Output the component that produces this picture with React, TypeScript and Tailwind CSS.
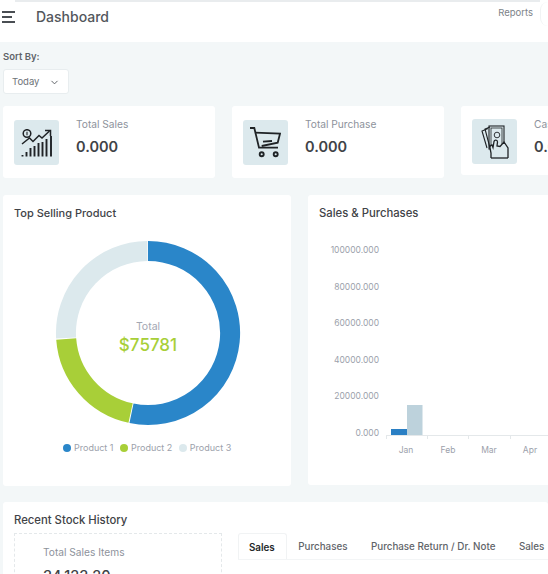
import React from 'react';
import { ChevronDown } from 'lucide-react';

const font = "[font-family:Inter,'Noto_Sans',sans-serif]";

const SalesIcon = () => (
    <svg width="32" height="28" viewBox="0 0 32 28" fill="none" stroke="#1f2326" strokeWidth="1.5">
        <circle cx="6" cy="4.500" r="3.800" />
        <path d="M6 2.700v3.600" strokeWidth="1.100" />
        <path d="M1 15 8.500 9l3.500 3.500 6-6 3 2.500L28.500 2" />
        <path d="M24 1.500h5.500V7" />
        <path d="M1.500 27.500v-1.500M5.500 27.500v-4.500M9.500 27.500V19M13.500 27.500V17M17.500 27.500V14M21.500 27.500V13M25.500 27.500V10M30 27.500V7" strokeWidth="1.900" />
    </svg>
);

const CartIcon = () => (
    <svg width="31" height="31" viewBox="0 0 31 31" fill="none" stroke="#1f2326" strokeWidth="1.800">
        <path d="M0 1h4.300L9 20.700h19" />
        <path d="M5 5.700l25 1-2.300 9-16 3.300" />
        <path d="M13 14.700l9-.7" />
        <circle cx="11.700" cy="27.300" r="2" strokeWidth="1.900" />
        <circle cx="25.700" cy="27.300" r="2" strokeWidth="1.900" />
    </svg>
);

const CashIcon = () => (
    <svg width="28" height="34" viewBox="0 0 28 34" fill="none" stroke="#1f2326" strokeWidth="1.100">
        <path d="M7 3.500 1 6l5 17" />
        <path d="M9 2 4 4l5 19" />
        <rect x="8" y="1" width="15" height="23" />
        <rect x="10" y="3" width="11" height="19" strokeWidth="0.800" />
        <circle cx="16" cy="10" r="2.800" strokeWidth="0.900" />
        <path d="M10 33v-5l-1-5c-.4-2 1-3 2-3l1 2.500 1-6c.4-2 3.500-2 3.500.5L16 21l3 .5 4-4.500 4 6v10" fill="#dce9ed" strokeWidth="1.300" />
        <path d="M10 33h17" strokeWidth="1.300" />
    </svg>
);

const StatCard = ({ icon, label, value, className, iconClass }: { icon: React.ReactNode; label: string; value: string; className: string; iconClass: string }) => (
    <div className={`flex shrink-0 bg-white rounded-[3px] pl-[11px] ${className}`}>
        <div className={`w-[45px] h-[45px] rounded-[3px] bg-[#dce9ed] flex items-center justify-center shrink-0 ${iconClass}`}>{icon}</div>
        <div className="ml-[17px] mt-[12px] whitespace-nowrap">
            <p className="text-[10.200px] leading-[13px] text-[#8d929b]">{label}</p>
            <p className="text-[14.500px] leading-[20px] mt-[6px] font-semibold text-[#3f4347]">{value}</p>
        </div>
    </div>
);

const Donut = () => (
    <svg width="188" height="188" viewBox="0 0 188 188" className="block">
        <g fill="none" strokeWidth="20">
            <path d="M94 12A82 82 0 1 1 77.500 174.300" stroke="#2a86c9" />
            <path d="M76.600 174.100A82 82 0 0 1 12.200 100" stroke="#a8cf38" />
            <path d="M12.100 99A82 82 0 0 1 93.400 12" stroke="#dce9ed" />
        </g>
    </svg>
);

const legend = [
    { name: 'Product 1', color: 'bg-[#2a86c9]' },
    { name: 'Product 2', color: 'bg-[#a8cf38]' },
    { name: 'Product 3', color: 'bg-[#dce9ed]' },
];

const yLabels = [
    { y: 33, t: '100000.000' },
    { y: 70, t: '80000.000' },
    { y: 106, t: '60000.000' },
    { y: 143, t: '40000.000' },
    { y: 179, t: '20000.000' },
    { y: 216, t: '0.000' },
];

const months = [
    { x: 87, t: 'Jan' },
    { x: 129, t: 'Feb' },
    { x: 170, t: 'Mar' },
    { x: 211, t: 'Apr' },
];

const BarChart = () => (
    <svg width="240" height="270" viewBox="0 0 240 270" className="block -mt-[1px]" fontFamily="Inter, sans-serif" fontSize="8.500" fill="#9ca1ab">
        {yLabels.map((l) => (
            <text key={l.t} x="60" y={l.y} textAnchor="end">{l.t}</text>
        ))}
        <path d="M67 215.500H240M67.500 215v4M108.500 215v4M149.500 215v4M191.500 215v4" stroke="#e4e8ea" fill="none" />
        <rect x="72" y="209" width="16" height="6" fill="#2a7fc4" />
        <rect x="88" y="185" width="15.500" height="30" fill="#bdd2dc" />
        {months.map((m) => (
            <text key={m.t} x={m.x} y="233" textAnchor="middle">{m.t}</text>
        ))}
    </svg>
);

const App: React.FC = () => {
    return (
        <div className={`w-[548px] h-[574px] overflow-hidden bg-[#f3f7f8] ${font}`}>
            <header className="h-[42px] bg-white relative flex items-start">
                <div className="absolute top-0 left-[15px] right-[8px] h-[2px] bg-[#e9ecee]" />
                <div className="absolute top-[2px] right-0 w-[8px] h-[24px] border-l border-[#f1f3f4] rounded-l-full" />
                <div className="flex flex-col gap-[3.500px] mt-[11px] ml-[2px] w-[34px]">
                    <span className="block h-[1.500px] w-[13px] bg-[#4a4e53]" />
                    <span className="block h-[1.500px] w-[10px] bg-[#4a4e53]" />
                    <span className="block h-[1.500px] w-[13px] bg-[#4a4e53]" />
                </div>
                <h1 className="text-[14px] leading-[18px] mt-[8px] font-medium text-[#53575c]">Dashboard</h1>
                <span className="ml-auto mr-[15px] mt-[6px] text-[9.500px] leading-[13px] text-[#7c8288]">Reports</span>
            </header>

            <div className="pl-[3px] pt-[9px]">
                <p className="text-[9.500px] leading-[12px] font-semibold text-[#5f6469]">Sort By:</p>
                <button className="mt-[6px] flex items-center w-[66px] h-[25px] bg-white border border-[#e8edef] rounded-[3px] pl-[8px] pt-[1px] text-[9.500px] text-[#6d7277]">
                    Today
                    <ChevronDown className="w-[11px] h-[11px] ml-[10px] text-[#55595e]" />
                </button>

                <div className="flex items-start mt-[12px]">
                    <StatCard icon={<SalesIcon />} label="Total Sales" value="0.000" className="w-[212px] h-[72px]" iconClass="mt-[14px]" />
                    <StatCard icon={<CartIcon />} label="Total Purchase" value="0.000" className="w-[212px] h-[72px] ml-[17px]" iconClass="mt-[14px]" />
                    <StatCard icon={<CashIcon />} label="Cash" value="0.000" className="w-[212px] h-[69px] ml-[17px]" iconClass="mt-[13px]" />
                </div>

                <div className="flex items-start mt-[17px]">
                    <section className="w-[288px] h-[291px] shrink-0 bg-white rounded-[3px] pl-[11px] pt-[11px]">
                        <h2 className="text-[11px] leading-[15px] font-medium text-[#3f4347]">Top Selling Product</h2>
                        <div className="relative w-[188px] mt-[18px] ml-[40px]">
                            <Donut />
                            <div className="absolute inset-0 flex flex-col items-center justify-center pt-[11px]">
                                <span className="text-[10.500px] leading-[14px] text-[#a3a7b3]">Total</span>
                                <span className="text-[17px] leading-[23px] font-medium text-[#a8cf38]">$75781</span>
                            </div>
                        </div>
                        <div className="flex gap-[6.500px] mt-[15px] ml-[49px]">
                            {legend.map((l) => (
                                <div key={l.name} className="flex items-center gap-[3px]">
                                    <span className={`w-[8px] h-[8px] rounded-full ${l.color}`} />
                                    <span className="text-[9px] leading-[12px] text-[#9ca1ab]">{l.name}</span>
                                </div>
                            ))}
                        </div>
                    </section>

                    <section className="w-[260px] h-[290px] shrink-0 ml-[17px] bg-white rounded-[3px] pl-[11px] pt-[11px]">
                        <h2 className="text-[11.300px] leading-[15px] font-medium text-[#3f4347]">Sales &amp; Purchases</h2>
                        <BarChart />
                    </section>
                </div>

                <section className="mt-[16px] bg-white rounded-[3px] pl-[11px] pt-[11px] h-[100px]">
                    <h2 className="text-[11.300px] leading-[15px] font-medium text-[#3f4347]">Recent Stock History</h2>
                    <div className="flex items-start mt-[5px]">
                        <div className="w-[208px] h-[60px] shrink-0 border border-dashed border-[#e4e8ea] pl-[28px] pt-[11px]">
                            <p className="text-[10.200px] leading-[14px] text-[#8d929b]">Total Sales Items</p>
                            <p className="text-[14.500px] leading-[20px] mt-[7px] font-medium text-[#3f4347]">34,123.20</p>
                        </div>
                        <div className="flex ml-[16px] text-[9.800px] font-medium text-[#5f6469] whitespace-nowrap border-b border-[#f3f5f6] h-[27px]">
                            <span className="pl-[10px] pr-[11px] leading-[28px] font-semibold text-[#24272a] border border-b-0 border-[#f1f3f4] rounded-t-[3px]">Sales</span>
                            <span className="px-[11.500px] leading-[28px]">Purchases</span>
                            <span className="px-[12px] leading-[28px]">Purchase Return / Dr. Note</span>
                            <span className="px-[11.500px] leading-[28px]">Sales</span>
                        </div>
                    </div>
                </section>
            </div>
        </div>
    );
};

export default App;
